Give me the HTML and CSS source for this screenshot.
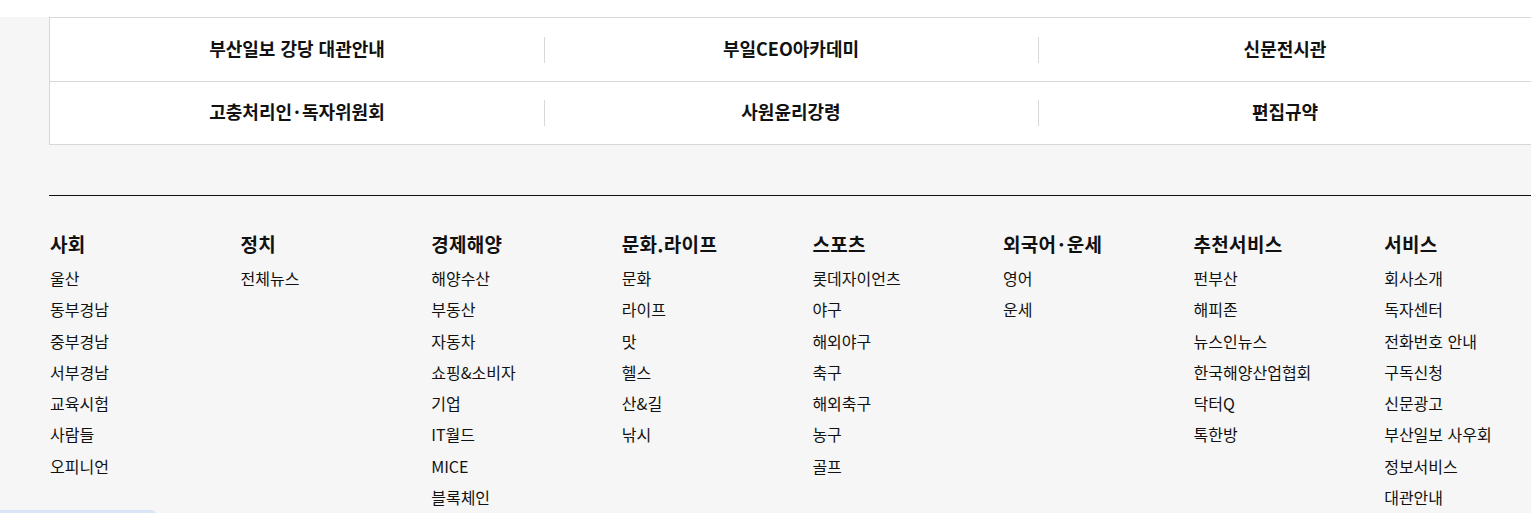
FILE: index.html
```html
<!DOCTYPE html>
<html lang="ko">
<head>
  <meta charset="UTF-8" />
  <meta name="viewport" content="width=device-width, initial-scale=1.0"/>
  <title>부산일보 사이트맵</title>
  <link rel="stylesheet" href="styles.css">
</head>
<body>

  <div class="top-space"></div>

  <div class="footer-wrap">
    <div class="info-box">
      <div class="info-row">
        <a class="info-item" href="#">부산일보 강당 대관안내</a>
        <a class="info-item" href="#">부일CEO아카데미</a>
        <a class="info-item" href="#">신문전시관</a>
      </div>
      <div class="info-row">
        <a class="info-item" href="#">고충처리인<span class="dot">·</span>독자위원회</a>
        <a class="info-item" href="#">사원윤리강령</a>
        <a class="info-item" href="#">편집규약</a>
      </div>
    </div>

    <div class="sitemap">
      <div class="sitemap-col">
        <h3>사회</h3>
        <ul>
          <li>울산</li>
          <li>동부경남</li>
          <li>중부경남</li>
          <li>서부경남</li>
          <li>교육시험</li>
          <li>사람들</li>
          <li>오피니언</li>
        </ul>
      </div>
      <div class="sitemap-col">
        <h3>정치</h3>
        <ul>
          <li>전체뉴스</li>
        </ul>
      </div>
      <div class="sitemap-col">
        <h3>경제해양</h3>
        <ul>
          <li>해양수산</li>
          <li>부동산</li>
          <li>자동차</li>
          <li>쇼핑&amp;소비자</li>
          <li>기업</li>
          <li>IT월드</li>
          <li>MICE</li>
          <li>블록체인</li>
        </ul>
      </div>
      <div class="sitemap-col">
        <h3>문화.라이프</h3>
        <ul>
          <li>문화</li>
          <li>라이프</li>
          <li>맛</li>
          <li>헬스</li>
          <li>산&amp;길</li>
          <li>낚시</li>
        </ul>
      </div>
      <div class="sitemap-col">
        <h3>스포츠</h3>
        <ul>
          <li>롯데자이언츠</li>
          <li>야구</li>
          <li>해외야구</li>
          <li>축구</li>
          <li>해외축구</li>
          <li>농구</li>
          <li>골프</li>
        </ul>
      </div>
      <div class="sitemap-col">
        <h3>외국어<span class="dot">·</span>운세</h3>
        <ul>
          <li>영어</li>
          <li>운세</li>
        </ul>
      </div>
      <div class="sitemap-col">
        <h3>추천서비스</h3>
        <ul>
          <li>펀부산</li>
          <li>해피존</li>
          <li>뉴스인뉴스</li>
          <li>한국해양산업협회</li>
          <li>닥터Q</li>
          <li>톡한방</li>
        </ul>
      </div>
      <div class="sitemap-col">
        <h3>서비스</h3>
        <ul>
          <li>회사소개</li>
          <li>독자센터</li>
          <li>전화번호 안내</li>
          <li>구독신청</li>
          <li>신문광고</li>
          <li>부산일보 사우회</li>
          <li>정보서비스</li>
          <li>대관안내</li>
        </ul>
      </div>
    </div>
  </div>

  <div class="float-tab"></div>

</body>
</html>
```

FILE: styles.css
```css
* {
  box-sizing: border-box;
}

body {
  font-family: "Noto Sans CJK KR", "Noto Sans", sans-serif;
  margin: 0;
  padding: 0;
  overflow: hidden;
  background: #f6f6f6;
  color: #111;
}

a {
  color: inherit;
  text-decoration: none;
}

.top-space {
  height: 17px;
  background: #fff;
}

.footer-wrap {
  padding-left: 49px;
  width: 1600px;
}

/* info links box */
.info-box {
  width: 1484px;
  background: #fff;
  border: 1px solid #d8d8d8;
}

.info-row {
  display: grid;
  grid-template-columns: repeat(3, 1fr);
  height: 63px;
  align-items: center;
}

.info-row + .info-row {
  border-top: 1px solid #d8d8d8;
}

.info-item {
  position: relative;
  text-align: center;
  font-size: 18px;
  font-weight: bold;
  color: #111;
  line-height: 26px;
  padding-bottom: 4px;
}

.info-item + .info-item::before {
  content: "";
  position: absolute;
  left: 0;
  top: 2px;
  width: 1px;
  height: 26px;
  background: #d8d8d8;
}

.dot {
  margin: 0 2px;
}

/* sitemap */
.sitemap {
  margin-top: 50px;
  border-top: 1px solid #111;
  padding-top: 35px;
  display: grid;
  grid-template-columns: repeat(8, 190.6px);
  padding-left: 1px;
}

.sitemap-col h3 {
  margin: 0 0 6px;
  font-size: 19px;
  font-weight: bold;
  line-height: 26px;
  color: #111;
  letter-spacing: 0.3px;
}

.sitemap-col ul {
  list-style: none;
  margin: 0;
  padding: 0;
}

.sitemap-col li {
  font-size: 16px;
  line-height: 31.3px;
  color: #111;
}

.float-tab {
  position: fixed;
  left: 0;
  bottom: -20px;
  width: 157px;
  height: 23px;
  background: #d9e4f5;
  border-radius: 0 6px 0 0;
}
```
